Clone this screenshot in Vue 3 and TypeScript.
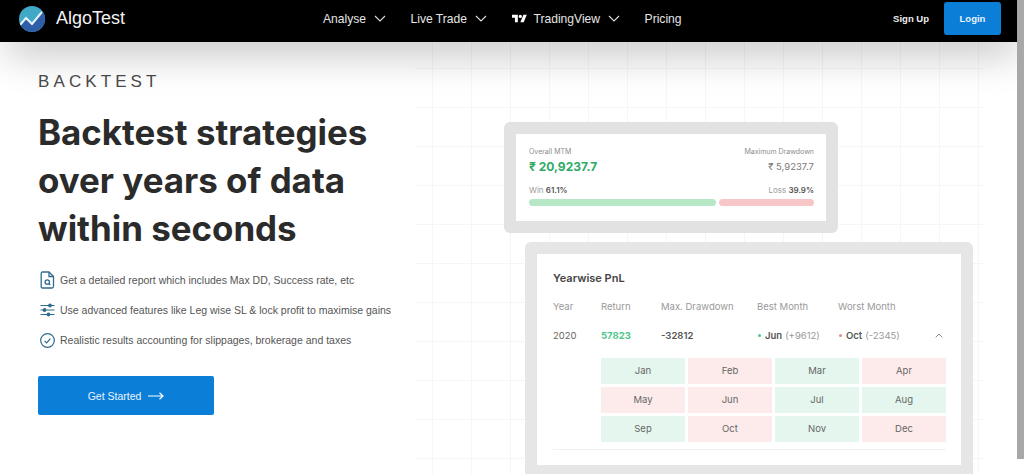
<template>
  <div class="page">
    <header class="nav">
      <div class="brand">
        <svg class="logo" viewBox="0 0 26 26" width="26" height="26">
          <defs>
            <clipPath id="logo-clip"><circle cx="13" cy="13" r="13" /></clipPath>
          </defs>
          <g clip-path="url(#logo-clip)">
            <rect width="26" height="26" fill="#41a9c6" />
            <path d="M0 20 L7 12 L13 18 L24 5 L26 8 V26 H0 Z" fill="#2f5ea8" />
            <path d="M1 19 L7 12 L13 18 L23 6" fill="none" stroke="#e8f3f6" stroke-width="2" />
          </g>
        </svg>
        <span class="brand-name">AlgoTest</span>
      </div>
      <nav class="links">
        <a v-for="l in navLinks" :key="l.label" class="link">
          <svg v-if="l.tv" class="tv" viewBox="0 0 36 26" width="15" height="11">
            <path d="M14 22H7V11H0V4h14v18zM28 22h-8l7.5-18h8L28 22z" fill="#fff" />
            <circle cx="20" cy="8" r="4" fill="#fff" />
          </svg>
          <span>{{ l.label }}</span>
          <svg v-if="l.caret" class="caret" viewBox="0 0 12 7" width="12" height="7">
            <path d="M1 1l5 5 5-5" fill="none" stroke="#ddd" stroke-width="1.1" />
          </svg>
        </a>
      </nav>
      <div class="auth">
        <a class="signup">Sign Up</a>
        <button class="login">Login</button>
      </div>
    </header>

    <main class="hero">
      <section class="intro">
        <div class="eyebrow">BACKTEST</div>
        <h1>Backtest strategies<br />over years of data<br />within seconds</h1>
        <ul class="features">
          <li>
            <svg viewBox="0 0 14 18" width="14" height="18" fill="none" stroke="#2f6b8f" stroke-width="1.3">
              <path d="M1.5 1h7l4.5 4.5V15.5a1.5 1.5 0 0 1-1.5 1.5h-10A1.5 1.5 0 0 1 .7 15.5V2.5A1.5 1.5 0 0 1 1.5 1z" />
              <path d="M8.5 1v4.5H13" />
              <circle cx="6.8" cy="11" r="2.2" />
              <path d="M8.4 12.6l1.4 1.4" />
            </svg>
            <span>Get a detailed report which includes Max DD, Success rate, etc</span>
          </li>
          <li>
            <svg viewBox="0 0 14 14" width="14" height="14" fill="none" stroke="#2f6b8f" stroke-width="1.2">
              <path d="M0 2.5h14M0 7h14M0 11.5h14" />
              <circle cx="9.5" cy="2.5" r="1.3" fill="#2f6b8f" />
              <circle cx="4" cy="7" r="1.3" fill="#2f6b8f" />
              <circle cx="8" cy="11.5" r="1.3" fill="#2f6b8f" />
            </svg>
            <span>Use advanced features like Leg wise SL &amp; lock profit to maximise gains</span>
          </li>
          <li>
            <svg viewBox="0 0 15 15" width="15" height="15" fill="none" stroke="#2f6b8f" stroke-width="1.2">
              <circle cx="7.5" cy="7.5" r="6.8" />
              <path d="M4.6 7.8l2 2 3.8-4.2" />
            </svg>
            <span>Realistic results accounting for slippages, brokerage and taxes</span>
          </li>
        </ul>
        <button class="cta">
          <span>Get Started</span>
          <svg viewBox="0 0 16 8" width="16" height="8" fill="none" stroke="#fff" stroke-width="1.2">
            <path d="M0 4h15M11.5 .8L15 4l-3.5 3.2" />
          </svg>
        </button>
      </section>

      <section class="visual">
        <div class="frame frame-summary">
          <div class="panel summary">
            <div class="summary-top">
              <div>
                <div class="tiny">Overall MTM</div>
                <div class="mtm">₹ 20,9237.7</div>
              </div>
              <div class="right">
                <div class="tiny">Maximum Drawdown</div>
                <div class="dd">₹ 5,9237.7</div>
              </div>
            </div>
            <div class="ratio">
              <span><i>Win</i> <b>61.1%</b></span>
              <span><i>Loss</i> <b>39.9%</b></span>
            </div>
            <div class="bars">
              <div class="bar win" :style="{ flexGrow: 187 }"></div>
              <div class="bar loss" :style="{ flexGrow: 95 }"></div>
            </div>
          </div>
        </div>

        <div class="frame frame-table">
          <div class="panel yearly">
            <h2>Yearwise PnL</h2>
            <div class="row head">
              <span>Year</span>
              <span>Return</span>
              <span>Max. Drawdown</span>
              <span>Best Month</span>
              <span>Worst Month</span>
            </div>
            <div class="row data">
              <span>2020</span>
              <span class="ret">57823</span>
              <span class="neg">-32812</span>
              <span class="mon"><em class="dot g"></em><b>Jun</b> <i>(+9612)</i></span>
              <span class="mon"><em class="dot r"></em><b>Oct</b> <i>(-2345)</i></span>
              <svg class="up" viewBox="0 0 8 5" width="8" height="5">
                <path d="M.7 4.3L4 1l3.3 3.3" fill="none" stroke="#888" stroke-width="1" />
              </svg>
            </div>
            <div class="months">
              <div v-for="m in months" :key="m.name" class="month" :class="m.up ? 'up-m' : 'down-m'">{{ m.name }}</div>
            </div>
            <div class="rule"></div>
          </div>
        </div>
      </section>
    </main>

    <div class="scroll-thumb"></div>
  </div>
</template>

<script setup lang="ts">
const navLinks = [
  { label: 'Analyse', caret: true, tv: false },
  { label: 'Live Trade', caret: true, tv: false },
  { label: 'TradingView', caret: true, tv: true },
  { label: 'Pricing', caret: false, tv: false },
]

const months = [
  { name: 'Jan', up: true },
  { name: 'Feb', up: false },
  { name: 'Mar', up: true },
  { name: 'Apr', up: false },
  { name: 'May', up: false },
  { name: 'Jun', up: false },
  { name: 'Jul', up: true },
  { name: 'Aug', up: true },
  { name: 'Sep', up: true },
  { name: 'Oct', up: false },
  { name: 'Nov', up: true },
  { name: 'Dec', up: false },
]
</script>

<style>
html,
body {
  margin: 0;
  overflow: hidden;
  background: #fff;
}
</style>

<style scoped>
.page {
  position: relative;
  width: 1024px;
  height: 474px;
  overflow: hidden;
  font-family: "Liberation Sans", Arial, sans-serif;
  background: #fff;
}

.nav {
  position: relative;
  z-index: 2;
  height: 42px;
  box-sizing: border-box;
  padding: 2px 23px 7px 19px;
  display: flex;
  align-items: center;
  background: #000;
  color: #fff;
  box-shadow: 0 16px 40px -6px rgba(0, 0, 0, 0.28);
}

.brand {
  display: flex;
  align-items: center;
  gap: 11px;
  width: 304px;
}

.brand-name {
  font-size: 18px;
  color: #f2f2f2;
}

.links {
  display: flex;
  align-items: center;
  gap: 24.5px;
  flex: 1;
}

.link {
  display: flex;
  align-items: center;
  font-size: 12.1px;
  color: #e6e6e6;
}

.tv {
  margin-right: 7px;
}

.caret {
  margin-left: 8px;
}

.auth {
  display: flex;
  align-items: center;
  gap: 15px;
}

.signup {
  font-size: 9.5px;
  font-weight: 700;
  color: #eee;
}

.login {
  width: 57px;
  height: 33px;
  border: none;
  border-radius: 3px;
  background: #0b7ed8;
  color: #e8f4ff;
  font: 700 9.5px "Liberation Sans", Arial, sans-serif;
}

.hero {
  display: flex;
  height: 432px;
}

.intro {
  position: relative;
  z-index: 1;
  width: 415px;
  flex: none;
  box-sizing: border-box;
  padding: 29px 0 0 38px;
}

.eyebrow {
  font-size: 17px;
  line-height: 22px;
  letter-spacing: 4.1px;
  color: #4a4a4a;
}

h1 {
  margin: 15px 0 0;
  font-family: Inter, "Liberation Sans", sans-serif;
  font-size: 34.9px;
  font-weight: 700;
  line-height: 48px;
  color: #2b2b2b;
}

.features {
  list-style: none;
  margin: 13px 0 0;
  padding: 0;
}

.features li {
  display: flex;
  align-items: center;
  height: 30px;
  font-size: 10.5px;
  color: #555;
}

.features svg {
  width: 15px;
  margin: 0 5px 0 2px;
  flex: none;
}

.cta {
  display: flex;
  align-items: center;
  justify-content: center;
  gap: 7px;
  width: 176px;
  height: 39px;
  margin-top: 21px;
  border: none;
  border-radius: 2px;
  background: #0b7ed8;
  color: #e8f4ff;
  font: 10.5px "Liberation Sans", Arial, sans-serif;
}

.visual {
  width: 570px;
  flex: none;
  box-sizing: border-box;
  padding-top: 80px;
  background-image:
    linear-gradient(#f6f6f6 1px, transparent 1px),
    linear-gradient(90deg, #f6f6f6 1px, transparent 1px);
  background-size: 39px 39px;
  background-position: 17px 26px;
}

.frame {
  box-sizing: border-box;
  border-radius: 6px;
  background: #e2e2e2;
  padding: 12px;
}

.frame-summary {
  width: 334px;
  height: 111px;
  margin-left: 89px;
}

.frame-table {
  width: 448px;
  height: 240px;
  margin: 9px 0 0 110px;
  padding-bottom: 17px;
  background: #e6e6e6;
}

.panel {
  box-sizing: border-box;
  height: 100%;
  background: #fff;
  font-family: Inter, "Liberation Sans", sans-serif;
}

.summary {
  padding: 13px 12px 0 13px;
}

.summary-top {
  display: flex;
  justify-content: space-between;
}

.right {
  text-align: right;
}

.tiny {
  font-size: 7px;
  line-height: 9px;
  color: #8c8c8c;
}

.mtm {
  margin-top: 3px;
  font-size: 12px;
  line-height: 16px;
  font-weight: 700;
  color: #2eaa66;
}

.dd {
  margin-top: 3px;
  font-size: 9.5px;
  line-height: 16px;
  color: #777;
}

.ratio {
  display: flex;
  justify-content: space-between;
  margin-top: 10px;
  font-size: 8px;
  line-height: 10px;
}

.ratio i {
  font-style: normal;
  color: #999;
}

.ratio b {
  font-weight: 600;
  color: #555;
}

.bars {
  display: flex;
  gap: 3px;
  margin-top: 4px;
}

.bar {
  flex: 1 1 0;
  height: 7px;
  border-radius: 4px;
}

.win {
  background: #b6e8c6;
}

.loss {
  background: #f7c6c6;
}

.yearly {
  padding: 17px 15px 0 16px;
}

h2 {
  margin: 0;
  font-size: 11px;
  line-height: 14px;
  font-weight: 600;
  color: #444;
}

.row {
  position: relative;
  display: grid;
  grid-template-columns: 48px 60px 96px 81px 1fr;
  align-items: center;
  font-size: 9.5px;
}

.head {
  margin-top: 14px;
  height: 14px;
  color: #999;
}

.data {
  margin-top: 15px;
  height: 14px;
  color: #666;
}

.ret {
  font-weight: 700;
  color: #4fc78a;
}

.neg {
  font-weight: 600;
  color: #555;
}

.mon {
  display: flex;
  align-items: center;
  gap: 3px;
}

.mon b {
  font-weight: 600;
  color: #555;
}

.mon i {
  font-style: normal;
  color: #999;
}

.dot {
  width: 3px;
  height: 3px;
  margin: 0 1px;
  border-radius: 50%;
}

.dot.g {
  background: #4fc78a;
}

.dot.r {
  background: #e58a8a;
}

.up {
  position: absolute;
  right: 3px;
  top: 5px;
}

.months {
  display: grid;
  grid-template-columns: repeat(4, 1fr);
  gap: 3px;
  margin: 16px 0 0 48px;
}

.month {
  height: 26px;
  line-height: 26px;
  text-align: center;
  font-size: 9.5px;
  color: #666;
}

.up-m {
  background: #e4f6ed;
}

.down-m {
  background: #fcebea;
}

.rule {
  height: 1px;
  margin-top: 7px;
  background: #f1f1f1;
}

.scroll-thumb {
  position: absolute;
  z-index: 3;
  top: 0;
  right: 0;
  width: 7px;
  height: 459px;
  background: #a8a8a8;
}
</style>
